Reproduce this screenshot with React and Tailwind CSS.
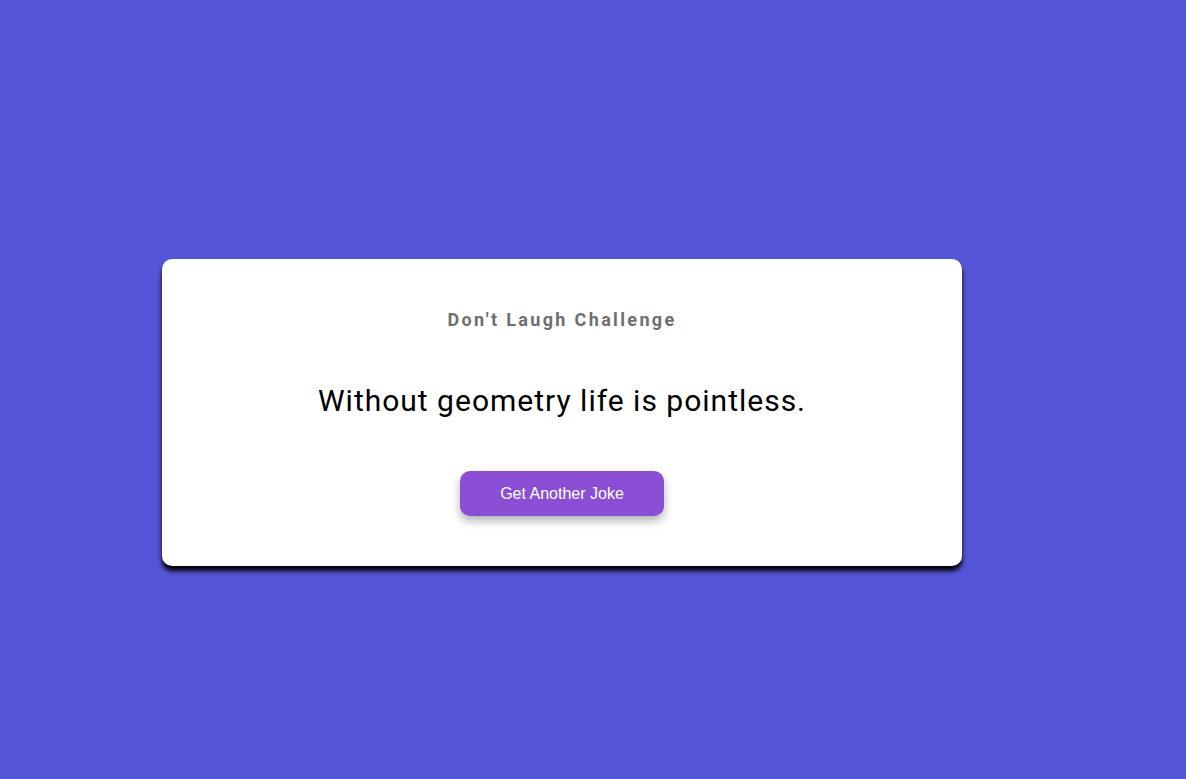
export default function App() {
  return (
    <div className="min-h-screen w-full bg-[#5555d8] pt-[259px] pl-[162px]">
      <div className="w-[800px] h-[307px] bg-white rounded-[10px] shadow-[0_5px_5px_rgba(0,0,0,1)] flex flex-col items-center pt-[50px]">
        <h3 className="font-['Roboto',sans-serif] text-[18px] leading-[21px] font-bold tracking-[2.35px] text-[#6e6e6e]">
          Don't Laugh Challenge
        </h3>
        <p className="mt-[53px] font-['Roboto',sans-serif] text-[30px] leading-[36px] tracking-[1px] text-black">
          Without geometry life is pointless.
        </p>
        <button className="mt-[52px] w-[204px] h-[45px] rounded-[10px] bg-[#8b4fd6] text-white font-['Liberation_Sans',Arial,sans-serif] text-[16px] shadow-[0_5px_10px_rgba(0,0,0,0.3)]">
          Get Another Joke
        </button>
      </div>
    </div>
  );
}
